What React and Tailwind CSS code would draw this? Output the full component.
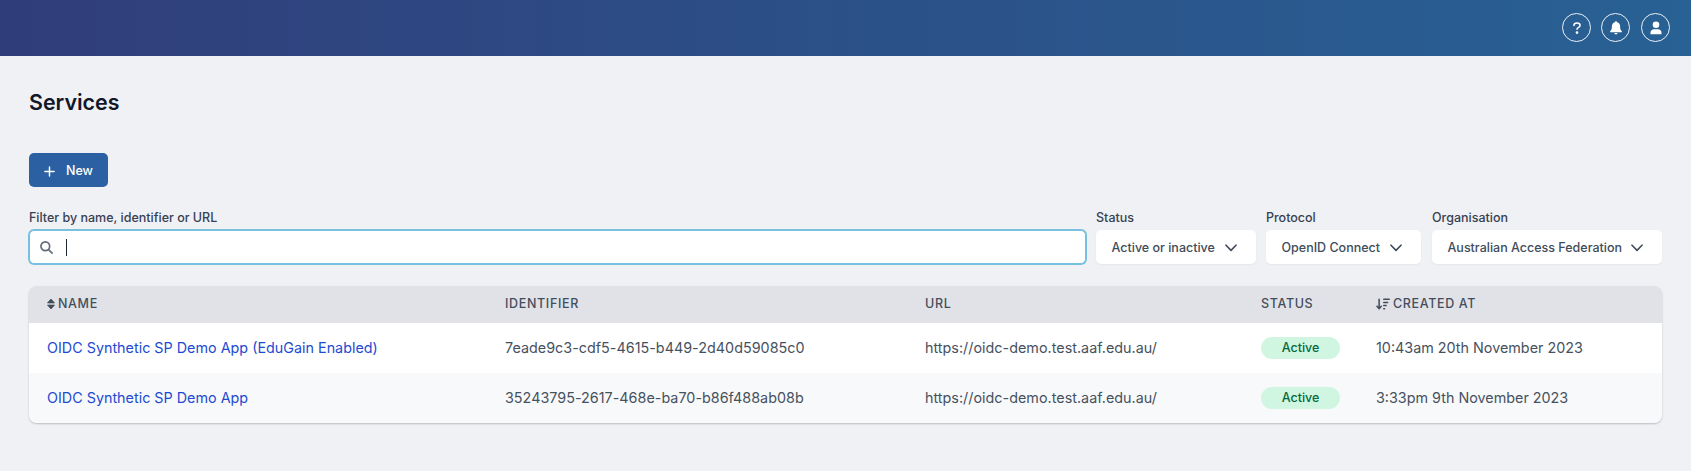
import React from "react";
import { FaArrowDownWideShort } from "react-icons/fa6";

const circle = "flex size-[29px] items-center justify-center rounded-full border border-white/90 text-white";

function Header() {
  return (
    <header className="flex h-14 items-center justify-end bg-linear-to-r from-[#303d7b] via-[#2b5088] to-[#286194] pr-[21px] pb-px">
      <button className={circle}>
        <svg viewBox="0 0 16 16" className="size-[14px]" fill="none" stroke="currentColor" strokeWidth="1.700" strokeLinecap="round" strokeLinejoin="round">
          <path d="M4.500 5.200C4.500 3.300 6 2.300 8 2.300s3.500 1 3.500 2.800c0 2.400-3.500 2.200-3.500 4.400" />
          <circle cx="8" cy="13.200" r=".7" fill="currentColor" />
        </svg>
      </button>
      <button className={`${circle} mr-[11px] ml-[10px]`}>
        <svg viewBox="0 0 16 16" className="size-4" fill="currentColor">
          <path d="M8 1.200c.7 0 1.100.5 1.100 1.100 2 .5 3 2.100 3 4.200 0 2.600.7 3.800 1.700 4.800.3.400.1 1-.5 1H2.700c-.6 0-.8-.6-.5-1 1-1 1.700-2.200 1.700-4.800 0-2.100 1-3.700 3-4.200 0-.6.4-1.100 1.100-1.100zM6.400 13.100h3.200c0 .8-.7 1.400-1.600 1.400s-1.600-.6-1.600-1.400z" />
        </svg>
      </button>
      <button className={circle}>
        <svg viewBox="0 0 16 16" className="size-4" fill="currentColor">
          <circle cx="8" cy="4.700" r="3.300" />
          <path d="M2.500 14.200v-1.500c0-2.200 1.600-3.500 3.500-3.500h4c1.900 0 3.500 1.300 3.500 3.500v1.500z" />
        </svg>
      </button>
    </header>
  );
}

function Select({ label, value, width }) {
  return (
    <div className={width}>
      <div className="h-[22px] pt-0.5 text-[12.5px] leading-4 font-medium text-[#374151]">{label}</div>
      <button className="flex h-[34px] w-full items-center justify-between rounded-[5px] bg-white pt-[2px] pr-[19px] pl-[15.5px] text-[12.5px] font-medium whitespace-nowrap text-[#414c5a] shadow-xs">
        <span>{value}</span>
        <svg viewBox="0 0 12 8" className="h-2 w-3" fill="none" stroke="currentColor" strokeWidth="1.6" strokeLinecap="round" strokeLinejoin="round">
          <path d="M1 1.200 6 6.400 11 1.200" />
        </svg>
      </button>
    </div>
  );
}

function SortIcon() {
  return (
    <svg viewBox="0 0 8 12" className="h-3 w-2" fill="currentColor" stroke="currentColor" strokeWidth=".8" strokeLinejoin="round">
      <path d="M.5 4.900 4 1l3.500 3.900zM.5 7.100 4 11l3.500-3.900z" />
    </svg>
  );
}

const rows = [
  ["OIDC Synthetic SP Demo App (EduGain Enabled)", "7eade9c3-cdf5-4615-b449-2d40d59085c0", "10:43am 20th November 2023"],
  ["OIDC Synthetic SP Demo App", "35243795-2617-468e-ba70-b86f488ab08b", "3:33pm 9th November 2023"],
];

const grid = "grid grid-cols-[458px_420px_336px_115px_1fr] items-center pl-[18px]";

export default function App() {
  return (
    <div className="h-[471px] overflow-hidden bg-[#f0f1f5] font-['Inter',sans-serif]">
      <Header />
      <main className="px-[29px] pt-[30px]">
        <h1 className="text-[21.4px] leading-8 font-semibold text-[#111827]">Services</h1>
        <button className="mt-[35px] flex h-[34px] w-[79px] items-center rounded-[5px] bg-[#2b61a2] pt-[2px] pl-[15px] text-[12.5px] font-medium text-white">
          <svg viewBox="0 0 12 12" className="mr-[11px] size-[11px]" fill="none" stroke="currentColor" strokeWidth="1.600" strokeLinecap="round">
            <path d="M6 1v10M1 6h10" />
          </svg>
          New
        </button>
        <div className="mt-[21px] flex">
          <div className="mr-[10px] w-[1057px]">
            <div className="h-[22px] pt-0.5 text-[12.5px] leading-4 font-medium text-[#374151]">Filter by name, identifier or URL</div>
            <div className="flex h-[34px] items-center rounded-[5px] border border-[#77c0e0] bg-white pl-[10px] ring-1 ring-[#77c0e0]">
              <svg viewBox="0 0 14 14" className="size-[13px] text-[#646b7a]" fill="none" stroke="currentColor" strokeWidth="1.800" strokeLinecap="round">
                <circle cx="5.700" cy="5.700" r="4.700" />
                <path d="m9.200 9.200 3.800 3.800" />
              </svg>
              <span className="ml-[13px] h-[17px] w-px bg-[#1f2937]" />
            </div>
          </div>
          <Select label="Status" value="Active or inactive" width="mr-[10px] w-[160px]" />
          <Select label="Protocol" value="OpenID Connect" width="mr-[11px] w-[155px]" />
          <Select label="Organisation" value="Australian Access Federation" width="w-[230px]" />
        </div>
        <div className="mt-[22px] overflow-hidden rounded-[8px] shadow-[0_1px_2px_rgba(0,0,0,0.22)]">
          <div className={`${grid} h-[37px] bg-[#e1e2e7] pb-px text-[12.5px] font-medium tracking-[0.65px] text-[#444e5b]`}>
            <div className="flex items-center gap-[3px]"><SortIcon />NAME</div>
            <div>IDENTIFIER</div>
            <div>URL</div>
            <div>STATUS</div>
            <div className="flex items-center gap-[3px]"><FaArrowDownWideShort className="mb-px size-[14px]" />CREATED AT</div>
          </div>
          {rows.map(([name, id, date], i) => (
            <div key={id} className={`${grid} h-[50px] text-[14.35px] text-[#465160] ${i ? "bg-[#f8f9fb]" : "bg-white"}`}>
              <a className="text-[#1d4bd2]">{name}</a>
              <div className="tracking-[0.015px]">{id}</div>
              <div className="tracking-[0.015px]">https://oidc-demo.test.aaf.edu.au/</div>
              <div><span className={`flex h-[22px] w-[79px] items-center justify-center rounded-full bg-[#d0f6e1] text-[12.5px] font-medium text-[#05693d] ${i ? "pt-px" : ""}`}>Active</span></div>
              <div>{date}</div>
            </div>
          ))}
        </div>
      </main>
    </div>
  );
}
